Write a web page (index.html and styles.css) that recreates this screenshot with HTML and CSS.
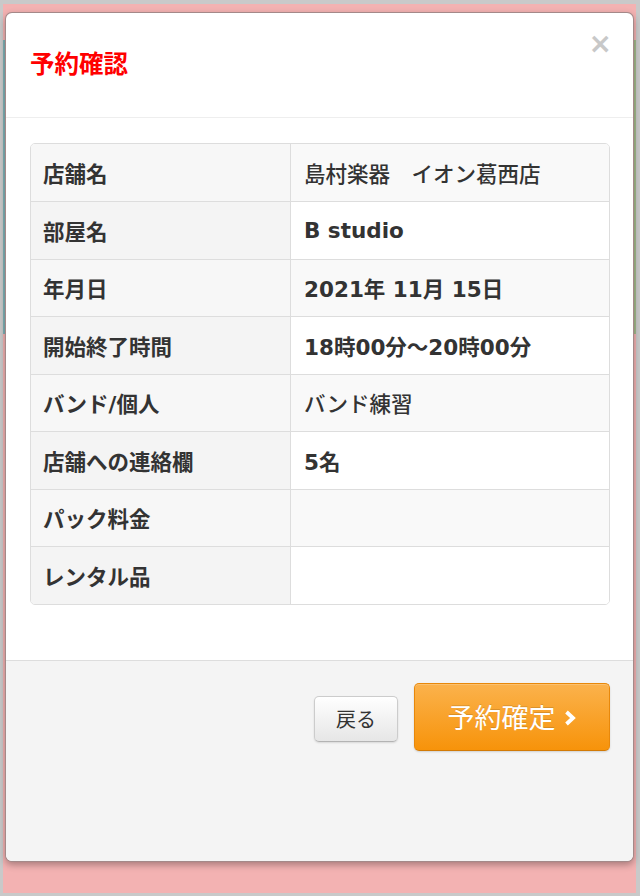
FILE: index.html
```html
<!DOCTYPE html>
<html lang="ja">
<head>
<meta charset="utf-8">
<title>予約確認</title>
<link rel="stylesheet" href="styles.css">
</head>
<body>
<div class="page">
  <div class="page-head"></div>
  <div class="page-mid"></div>
</div>
<div class="modal">
  <div class="modal-header">
    <h3 class="modal-title">予約確認</h3>
    <span class="close">×</span>
  </div>
  <div class="modal-body">
    <div class="table-wrap">
      <table class="info">
        <tr><th>店舗名</th><td class="normal">島村楽器　イオン葛西店</td></tr>
        <tr><th>部屋名</th><td>B studio</td></tr>
        <tr><th>年月日</th><td>2021年 11月 15日</td></tr>
        <tr><th>開始終了時間</th><td>18時00分〜20時00分</td></tr>
        <tr><th>バンド/個人</th><td class="normal">バンド練習</td></tr>
        <tr><th>店舗への連絡欄</th><td>5名</td></tr>
        <tr><th>パック料金</th><td></td></tr>
        <tr><th>レンタル品</th><td></td></tr>
      </table>
    </div>
  </div>
  <div class="modal-footer">
    <button class="btn btn-back">戻る</button>
    <button class="btn btn-confirm">予約確定<svg class="chev" width="14" height="18" viewBox="0 0 14 18"><path d="M3.5 3 L10 9 L3.5 15" fill="none" stroke="#fff" stroke-width="3.8" stroke-linejoin="miter"/></svg></button>
  </div>
</div>
</body>
</html>
```
FILE: styles.css
```css
html, body {
  margin: 0;
  padding: 0;
  background: #c9c9c9;
  font-family: "DejaVu Sans", "Noto Sans CJK JP", sans-serif;
}
.page {
  margin: 4px 4px 3px 3px;
  height: 889px;
  background: #f3b2b2;
  display: flex;
  flex-direction: column;
}
.page-head {
  height: 36px;
}
.page-mid {
  height: 294px;
  background:
    linear-gradient(90deg, #7fb1b6 0 4px, transparent 4px calc(100% - 4px), #a3b98c calc(100% - 4px));
}
.modal {
  position: absolute;
  left: 5px;
  top: 12px;
  width: 627px;
  height: 848px;
  background: #fff;
  border: 1px solid rgba(90, 40, 40, 0.55);
  border-radius: 7px;
  box-shadow: 0 3px 7px rgba(0, 0, 0, 0.3);
  display: flex;
  flex-direction: column;
  overflow: hidden;
}
.modal-header {
  height: 105px;
  padding: 0 24px 4px;
  box-sizing: border-box;
  display: flex;
  align-items: center;
  border-bottom: 1px solid #eee;
  position: relative;
}
.modal-title {
  margin: 0;
  color: #f00;
  font-family: "Noto Sans CJK JP", sans-serif;
  font-weight: 700;
  font-size: 24.5px;
  line-height: 30px;
}
.close {
  position: absolute;
  right: 21px;
  top: 13px;
  font-family: "DejaVu Sans", sans-serif;
  font-size: 28px;
  font-weight: 700;
  color: #c8c8c8;
  line-height: 36px;
}
.modal-body {
  padding: 25px 23px 55px 24px;
}
.table-wrap {
  border: 1px solid #ddd;
  border-radius: 5px;
  overflow: hidden;
}
.info {
  width: 100%;
  border-collapse: collapse;
  font-size: 21.5px;
  color: #333;
}
.info th, .info td {
  text-align: left;
  padding: 0 12px;
  height: 56.5px;
  border-top: 1px solid #ddd;
  font-weight: 700;
  font-family: "DejaVu Sans", "Noto Sans CJK JP", sans-serif;
}
.info td {
  font-size: 21.5px;
}
.info td.normal {
  font-weight: 500;
}
.info tr:first-child th, .info tr:first-child td {
  border-top: none;
  height: 57px;
}
.info th {
  width: 235px;
  background: #f4f4f4;
  border-right: 1px solid #ddd;
}
.info tr:nth-child(odd) th {
  background: #f7f7f7;
}
.info tr:nth-child(odd) td {
  background: #f9f9f9;
}
.info td {
  padding-left: 13px;
  background: #fff;
}
.modal-footer {
  flex: 1;
  background: #f4f4f4;
  border-top: 1px solid #ddd;
  display: flex;
  justify-content: flex-end;
  align-items: flex-start;
  gap: 16px;
  padding: 22px 23px 0 0;
}
.btn {
  font-family: "Noto Sans CJK JP", sans-serif;
  border-radius: 5px;
  cursor: pointer;
  display: flex;
  align-items: center;
  justify-content: center;
}
.btn-back {
  margin-top: 13px;
  width: 84px;
  height: 46px;
  font-size: 20px;
  color: #333;
  background: linear-gradient(#ffffff, #e6e6e6);
  border: 1px solid #ccc;
  border-bottom-color: #b3b3b3;
  box-shadow: 0 1px 2px rgba(0, 0, 0, 0.12);
}
.btn-confirm {
  width: 196px;
  height: 68px;
  font-size: 27px;
  font-weight: 400;
  color: #fff;
  background: linear-gradient(#fbb24c, #f7930a);
  border: 1px solid #e8880a;
  border-bottom-color: #d27a06;
  box-shadow: 0 1px 2px rgba(0, 0, 0, 0.15), inset 0 1px 0 rgba(255,255,255,0.2);
  text-shadow: 0 -1px 0 rgba(0, 0, 0, 0.15);
  gap: 7px;
  padding: 0;
}
.chev {
  margin-top: 2px;
}
```
